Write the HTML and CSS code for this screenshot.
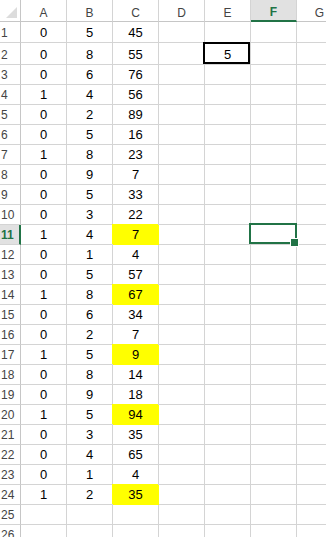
FILE: index.html
```html
<!DOCTYPE html>
<html lang="en">
<head>
  <meta charset="UTF-8" />
  <title>Sheet1</title>
  <link rel="stylesheet" href="styles.css">
</head>
<body>
  <div class="sheet" id="sheet">
    <div class="row head">
      <div class="corner">
        <svg width="20" height="21" viewBox="0 0 20 21"><polygon points="17,7 17,18 6,18" fill="#dcdcdc"/></svg>
      </div>
      <div class="col">A</div>
      <div class="col">B</div>
      <div class="col">C</div>
      <div class="col">D</div>
      <div class="col">E</div>
      <div class="col active">F</div>
      <div class="col">G</div>
    </div>
  </div>

  <script>
    const data = [
      [0, 5, 45], [0, 8, 55], [0, 6, 76], [1, 4, 56], [0, 2, 89], [0, 5, 16],
      [1, 8, 23], [0, 9, 7], [0, 5, 33], [0, 3, 22], [1, 4, 7], [0, 1, 4],
      [0, 5, 57], [1, 8, 67], [0, 6, 34], [0, 2, 7], [1, 5, 9], [0, 8, 14],
      [0, 9, 18], [1, 5, 94], [0, 3, 35], [0, 4, 65], [0, 1, 4], [1, 2, 35]
    ];
    // rows filled yellow in column C
    const hotRows = [11, 14, 17, 20, 24];

    function buildSheet() {
      const sheet = document.getElementById('sheet');
      for (let r = 1; r <= 26; r++) {
        const vals = data[r - 1] || ['', '', ''];
        const row = document.createElement('div');
        row.className = 'row' + (r === 1 ? ' r1' : r === 2 ? ' r2' : '');
        let html = `<div class="num${r === 11 ? ' active' : ''}">${r}</div>`;
        vals.forEach((v, i) => {
          const hot = i === 2 && hotRows.includes(r);
          html += `<div class="cell${hot ? ' hot' : ''}">${v}</div>`;
        });
        html += `<div class="cell"></div>`;
        html += `<div class="cell${r === 2 ? ' boxed' : ''}">${r === 2 ? 5 : ''}</div>`;
        html += `<div class="cell${r === 11 ? ' selected' : ''}"></div>`;
        html += `<div class="cell"></div>`;
        row.innerHTML = html;
        sheet.appendChild(row);
      }
    }

    buildSheet();
  </script>
</body>
</html>
```

FILE: styles.css
```css
:root {
  --grid: #d4d4d4;
  --head-line: #c6c6c6;
  --head-text: #444;
  --excel-green: #217346;
  --active-bg: #e1e1e1;
  --hot: #ffff00;
}
* { box-sizing: border-box; }
body {
  margin: 0;
  background: #fff;
  font-family: "Liberation Sans", Arial, sans-serif;
  color: #000;
  overflow: hidden;
}
.sheet {
  display: flex;
  flex-direction: column;
  width: 100%;
  overflow: hidden;
}
.row {
  display: grid;
  grid-template-columns: 21px repeat(7, 46px);
  height: 20px;
  flex-shrink: 0;
}
.row.head { height: 22px; }
.row.r1 { height: 21px; }
.row.r2 { height: 22px; }

.corner {
  border-right: 1px solid var(--head-line);
  border-bottom: 1px solid var(--head-line);
}
.corner svg { display: block; }

.col, .num, .cell {
  display: flex;
  align-items: flex-end;
  border-right: 1px solid var(--grid);
  border-bottom: 1px solid var(--grid);
}
.col {
  justify-content: center;
  font-size: 12px;
  line-height: 16px;
  color: var(--head-text);
  border-bottom-color: var(--head-line);
}
.col.active {
  background: var(--active-bg);
  color: var(--excel-green);
  font-weight: bold;
  border-bottom: 2px solid var(--excel-green);
  line-height: 15px;
}
.num {
  justify-content: flex-start;
  padding-left: 1px;
  font-size: 12px;
  line-height: 17px;
  color: var(--head-text);
  border-right-color: var(--head-line);
}
.num.active {
  background: var(--active-bg);
  color: var(--excel-green);
  font-weight: bold;
  border-right: 2px solid var(--excel-green);
}
.cell {
  justify-content: center;
  font-size: 13px;
  line-height: 19px;
}
.cell.hot {
  background: var(--hot);
  border-color: var(--hot);
  box-shadow: -1px -1px 0 var(--hot);
}
.cell.boxed,
.cell.selected { position: relative; }
.cell.boxed::after {
  content: "";
  position: absolute;
  top: -1px;
  left: -2px;
  right: 0;
  bottom: 0;
  border: 2px solid #000;
}
.cell.selected::after {
  content: "";
  position: absolute;
  top: -2px;
  left: -2px;
  right: -1px;
  bottom: 0;
  border: 2px solid var(--excel-green);
}
.cell.selected::before {
  content: "";
  position: absolute;
  right: -3px;
  bottom: -3px;
  width: 7px;
  height: 7px;
  background: var(--excel-green);
  border: 1px solid #fff;
  z-index: 1;
}
```
